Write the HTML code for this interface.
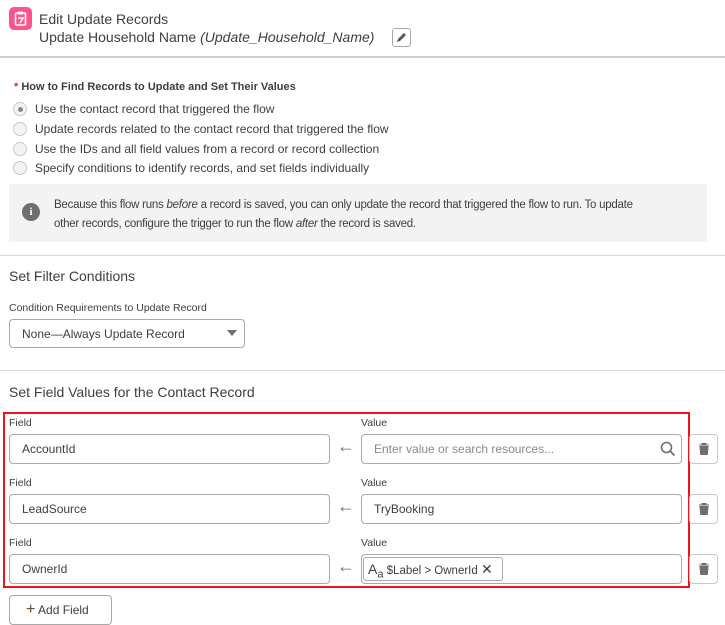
<!DOCTYPE html>
<html><head><meta charset="utf-8"><style>
*{box-sizing:border-box;margin:0;padding:0}
body{width:725px;height:625px;background:#fff;font-family:"Liberation Sans",sans-serif;color:#3e3e3c;position:relative;overflow:hidden}
.a{position:absolute;white-space:nowrap}
.hr{position:absolute;left:0;width:725px;height:1px;background:#d8d8d8}
.inp{position:absolute;height:30px;border:1px solid #a9a9a9;border-radius:4px;background:#fff;font-size:12px;padding-left:12px;line-height:28px;color:#3e3e3c}
.lab{position:absolute;font-size:10.5px;color:#3e3e3c;font-weight:normal}
.radio{position:absolute;left:13px;width:14px;height:14px;border:1px solid #c9c9c9;border-radius:50%;background:#f3f3f3}
.rt{position:absolute;left:35px;font-size:12px;color:#3e3e3c}
.arr{position:absolute;left:337px;font-size:18px;color:#706e6b;line-height:18px}
.trash{position:absolute;left:689px;width:29px;height:30px;border:1px solid #c9c9c9;border-radius:4px;background:#fff}
</style></head><body>
<div class="a" style="left:9px;top:7px;width:23px;height:23px;background:#ff538a;border-radius:5px"></div>
<svg class="a" style="left:9px;top:7px" width="23" height="23" viewBox="0 0 23 23"><rect x="6.5" y="6" width="10" height="12" rx="1" fill="none" stroke="#fff" stroke-width="1.6"/><rect x="9" y="4.5" width="5" height="3" fill="#fff"/><path d="M9 11h5l-3 5" stroke="#fff" stroke-width="1.6" fill="none"/></svg>
<div class="a" style="left:39px;top:11px;font-size:14px;color:#3e3e3c">Edit Update Records</div>
<div class="a" style="left:39px;top:29px;font-size:14px;color:#3e3e3c">Update Household Name <i>(Update_Household_Name)</i></div>
<div class="a" style="left:392px;top:28px;width:19px;height:19px;border:1px solid #a9a9a9;border-radius:3px"></div>
<svg class="a" style="left:392px;top:28px" width="19" height="19"><path d="M5 14l1-3 6-6 2 2-6 6z" fill="#555"/></svg>
<div class="hr" style="top:56px;height:2px;background:#d0d0d0"></div>
<div class="a" style="left:14px;top:81px;font-size:11px;font-weight:bold;color:#3e3e3c"><span style="color:#c23934">*</span> How to Find Records to Update and Set Their Values</div>
<div class="radio" style="top:102px"></div><div class="a" style="left:17.5px;top:106.5px;width:5px;height:5px;border-radius:50%;background:#888"></div>
<div class="rt" style="top:102px">Use the contact record that triggered the flow</div>
<div class="radio" style="top:122px"></div><div class="rt" style="top:122px">Update records related to the contact record that triggered the flow</div>
<div class="radio" style="top:142px"></div><div class="rt" style="top:142px">Use the IDs and all field values from a record or record collection</div>
<div class="radio" style="top:161px"></div><div class="rt" style="top:161px">Specify conditions to identify records, and set fields individually</div>
<div class="a" style="left:9px;top:184px;width:698px;height:58px;background:#f3f3f3"></div>
<div class="a" style="left:22px;top:203px;width:18px;height:18px;border-radius:50%;background:#706e6b;color:#fff;font-size:11px;font-weight:bold;text-align:center;line-height:18px;font-family:'Liberation Serif',serif">i</div>
<div class="a" style="left:54px;top:196px;font-size:11.5px;line-height:19px;color:#3e3e3c;letter-spacing:-0.25px">Because this flow runs <i>before</i> a record is saved, you can only update the record that triggered the flow to run. To update<br>other records, configure the trigger to run the flow <i>after</i> the record is saved.</div>
<div class="hr" style="top:255px"></div>
<div class="a" style="left:9px;top:268px;font-size:14px">Set Filter Conditions</div>
<div class="lab" style="left:9px;top:302px">Condition Requirements to Update Record</div>
<div class="inp" style="left:9px;top:319px;width:236px;height:29px">None—Always Update Record</div>
<div class="a" style="left:227px;top:330px;width:0;height:0;border-left:5px solid transparent;border-right:5px solid transparent;border-top:6px solid #706e6b"></div>
<div class="hr" style="top:370px"></div>
<div class="a" style="left:9px;top:384px;font-size:14px">Set Field Values for the Contact Record</div>
<div class="a" style="left:3px;top:412px;width:687px;height:176px;border:2px solid #e8151c"></div>

<div class="lab" style="left:9px;top:417px">Field</div><div class="lab" style="left:361px;top:417px">Value</div>
<div class="inp" style="left:9px;top:434px;width:321px">AccountId</div>
<div class="arr" style="top:437px">&#8592;</div>
<div class="inp" style="left:361px;top:434px;width:321px;color:#8a8a8a">Enter value or search resources...</div>
<svg class="a" style="left:660px;top:441px" width="16" height="16"><circle cx="6.5" cy="6.5" r="5" stroke="#706e6b" stroke-width="1.6" fill="none"/><path d="M10 10l4.5 4.5" stroke="#706e6b" stroke-width="1.8"/></svg>
<div class="trash" style="top:434px"></div>

<div class="lab" style="left:9px;top:477px">Field</div><div class="lab" style="left:361px;top:477px">Value</div>
<div class="inp" style="left:9px;top:494px;width:321px">LeadSource</div>
<div class="arr" style="top:497px">&#8592;</div>
<div class="inp" style="left:361px;top:494px;width:321px">TryBooking</div>
<div class="trash" style="top:494px"></div>

<div class="lab" style="left:9px;top:537px">Field</div><div class="lab" style="left:361px;top:537px">Value</div>
<div class="inp" style="left:9px;top:554px;width:321px">OwnerId</div>
<div class="arr" style="top:557px">&#8592;</div>
<div class="inp" style="left:361px;top:554px;width:321px"></div>
<div class="a" style="left:363px;top:557px;width:140px;height:24px;border:1px solid #a9a9a9;border-radius:3px;font-size:11.5px;line-height:22px;padding-left:4px"><span style="font-size:14px">A</span><sub style="font-size:11px">a</sub> $Label &gt; OwnerId <span style="font-size:14px">✕</span></div>
<div class="trash" style="top:554px"></div>

<svg class="a" style="left:697px;top:442px" width="14" height="14"><path d="M2 3h10M5 3V1.5h4V3M3 4.5h8l-.7 8H3.7z" fill="#706e6b" stroke="#706e6b"/></svg>
<svg class="a" style="left:697px;top:502px" width="14" height="14"><path d="M2 3h10M5 3V1.5h4V3M3 4.5h8l-.7 8H3.7z" fill="#706e6b" stroke="#706e6b"/></svg>
<svg class="a" style="left:697px;top:562px" width="14" height="14"><path d="M2 3h10M5 3V1.5h4V3M3 4.5h8l-.7 8H3.7z" fill="#706e6b" stroke="#706e6b"/></svg>

<div class="a" style="left:9px;top:595px;width:103px;height:30px;border:1px solid #a9a9a9;border-radius:4px;font-size:12px;line-height:28px;padding-left:16px"><span style="font-size:16px;color:#6b4a2a">+</span> Add Field</div>
</body></html>
